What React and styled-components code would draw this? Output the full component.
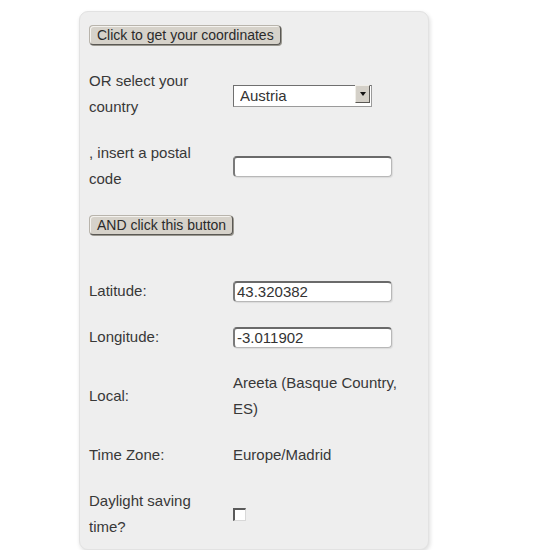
import React from "react";
import styled, { createGlobalStyle } from "styled-components";

const Global = createGlobalStyle`
  html, body { margin: 0; padding: 0; background: #ffffff; }
  body { font-family: "Liberation Sans", Arial, sans-serif; }
`;

const Page = styled.div`
  padding: 11px 0 0 79px;
`;

const Panel = styled.form`
  width: 329px;
  padding: 10px 10px 9px 9px;
  background: #eeeeee;
  border: 1px solid #e2e2e2;
  border-radius: 9px;
  box-shadow: 1px 2px 4px rgba(0, 0, 0, 0.14);
  display: flex;
  flex-direction: column;
  gap: 20px;
  color: #383838;
  font-size: 15px;
  line-height: 26px;
`;

const Row = styled.div`
  display: grid;
  grid-template-columns: 130px 1fr;
  column-gap: 14px;
  align-items: center;
  min-height: ${(p) => (p.$empty ? "0" : "26px")};
`;

const ButtonRow = styled.div`
  display: flex;
  align-items: center;
  height: 26px;
`;

const Label = styled.div``;

const Value = styled.div``;

const ClassicButton = styled.button`
  font-family: "Liberation Sans", Arial, sans-serif;
  font-size: 14px;
  color: #2a2a2a;
  height: 20px;
  line-height: 16px;
  padding: 0 6px 0 7px;
  background: #d6d2ca;
  border: 1px solid #b8b4ac;
  border-right-color: #5a5854;
  border-bottom-color: #5a5854;
  border-radius: 4px;
  box-shadow: 1px 1px 0 #9a9890, inset 1px 1px 0 #f4f2ee;
  cursor: pointer;
`;

const SelectWrap = styled.div`
  position: relative;
  width: 139px;
  height: 22px;
`;

const NativeSelect = styled.select`
  appearance: none;
  -webkit-appearance: none;
  width: 100%;
  height: 100%;
  box-sizing: border-box;
  margin: 0;
  padding: 0 0 0 6px;
  border: 1px solid #6f6f6f;
  border-right-color: #9a9a9a;
  border-bottom-color: #9a9a9a;
  background: #ffffff;
  font-family: "Liberation Sans", Arial, sans-serif;
  font-size: 15px;
  color: #333;
  border-radius: 0;
`;

const Arrow = styled.span`
  position: absolute;
  right: 2px;
  top: 2px;
  bottom: 2px;
  width: 15px;
  background: #d4d0c8;
  border-left: 1px solid #f0eee8;
  border-top: 1px solid #f0eee8;
  border-right: 1px solid #5a5854;
  border-bottom: 1px solid #5a5854;
  box-sizing: border-box;
  display: flex;
  align-items: center;
  justify-content: center;
  pointer-events: none;
  &::after {
    content: "";
    border-left: 3.5px solid transparent;
    border-right: 3.5px solid transparent;
    border-top: 4px solid #111;
  }
`;

const TextInput = styled.input`
  display: block;
  width: 159px;
  height: 21px;
  box-sizing: border-box;
  margin: 0;
  padding: 0 2px;
  background: #ffffff;
  border: 1px solid #b8b8b8;
  border-top: 2px solid #6a6a6a;
  border-left: 2px solid #7a7a7a;
  border-radius: 4px;
  box-shadow: 1px 1px 1px rgba(0, 0, 0, 0.08);
  font-family: "Liberation Sans", Arial, sans-serif;
  font-size: 15px;
  color: #333;
  outline: none;
`;

const Check = styled.input`
  appearance: none;
  -webkit-appearance: none;
  display: block;
  width: 13px;
  height: 13px;
  margin: 0;
  background: #ffffff;
  border: 1px solid #d8d8d8;
  border-top: 2px solid #5a5a5a;
  border-left: 2px solid #5a5a5a;
  box-sizing: border-box;
`;

export default function App() {
  return (
    <>
      <Global />
      <Page>
        <Panel onSubmit={(e) => e.preventDefault()}>
          <ButtonRow>
            <ClassicButton type="button">Click to get your coordinates</ClassicButton>
          </ButtonRow>
          <Row>
            <Label>OR select your country</Label>
            <Value>
              <SelectWrap>
                <NativeSelect defaultValue="Austria">
                  <option>Austria</option>
                  <option>Spain</option>
                  <option>France</option>
                </NativeSelect>
                <Arrow />
              </SelectWrap>
            </Value>
          </Row>
          <Row>
            <Label>, insert a postal code</Label>
            <Value>
              <TextInput type="text" defaultValue="" />
            </Value>
          </Row>
          <ButtonRow>
            <ClassicButton type="button">AND click this button</ClassicButton>
          </ButtonRow>
          <Row $empty />
          <Row>
            <Label>Latitude:</Label>
            <Value>
              <TextInput type="text" defaultValue="43.320382" />
            </Value>
          </Row>
          <Row>
            <Label>Longitude:</Label>
            <Value>
              <TextInput type="text" defaultValue="-3.011902" />
            </Value>
          </Row>
          <Row>
            <Label>Local:</Label>
            <Value>Areeta (Basque Country, ES)</Value>
          </Row>
          <Row>
            <Label>Time Zone:</Label>
            <Value>Europe/Madrid</Value>
          </Row>
          <Row>
            <Label>Daylight saving time?</Label>
            <Value>
              <Check type="checkbox" />
            </Value>
          </Row>
        </Panel>
      </Page>
    </>
  );
}
